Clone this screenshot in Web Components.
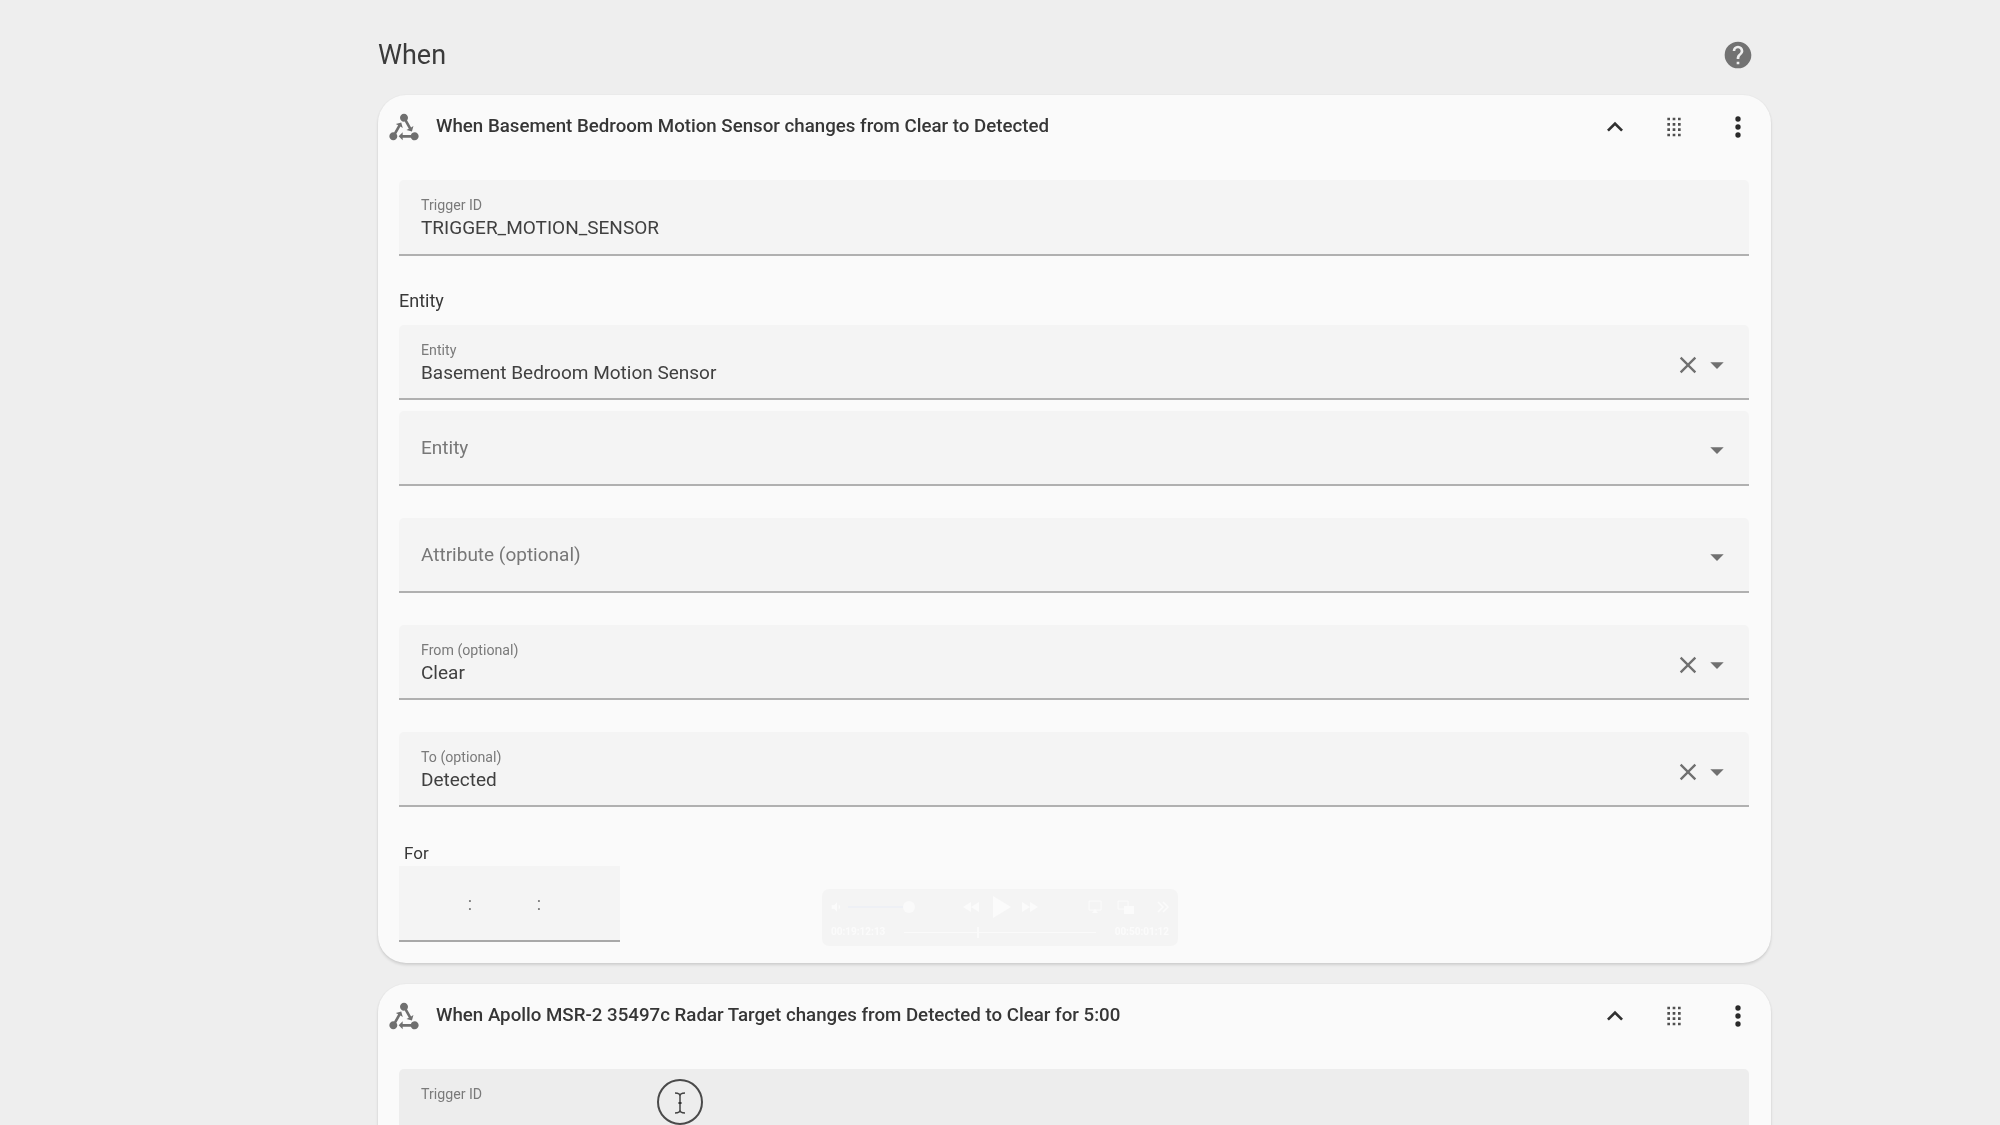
<!DOCTYPE html>
<html lang="en"><head><meta charset="utf-8"><title>When</title>
<style>
html,body{margin:0;height:1125px;overflow:hidden;background:#eeeeee;font-family:Roboto,"Liberation Sans",sans-serif;color:#212121}
body{filter:blur(.5px)}
</style></head><body>
<ha-page>
  <trigger-card title-text="When Basement Bedroom Motion Sensor changes from Clear to Detected">
    <text-field style="height:76px" label="Trigger ID" value="TRIGGER_MOTION_SENSOR"></text-field>
    <section-label style="margin:31px 0 0">Entity</section-label>
    <text-field style="margin-top:10px" label="Entity" value="Basement Bedroom Motion Sensor" clear arrow></text-field>
    <text-field style="margin-top:11px;height:75px" label="Entity" arrow></text-field>
    <text-field style="margin-top:32px" label="Attribute (optional)" arrow></text-field>
    <text-field style="margin-top:32px" label="From (optional)" value="Clear" clear arrow></text-field>
    <text-field style="margin-top:32px" label="To (optional)" value="Detected" clear arrow></text-field>
    <section-label style="margin:33px 0 0 5px;font-size:17px;line-height:26px">For</section-label>
    <duration-field></duration-field>
  </trigger-card>
  <trigger-card title-text="When Apollo MSR-2 35497c Radar Target changes from Detected to Clear for 5:00">
    <text-field label="Trigger ID" hover></text-field>
  </trigger-card>
</ha-page>
<media-hud></media-hud>
<cursor-ring></cursor-ring>
<script>
const P={
 state:"M6.27 17.05C6.72 17.58 7 18.25 7 19C7 20.66 5.66 22 4 22S1 20.66 1 19 2.34 16 4 16C4.18 16 4.36 16 4.53 16.05L7.6 10.69L5.86 9.7L9.95 8.58L11.07 12.67L9.33 11.68L6.27 17.05M20 16C18.7 16 17.6 16.84 17.18 18H11V16L8 19L11 22V20H17.18C17.6 21.16 18.7 22 20 22C21.66 22 23 20.66 23 19S21.66 16 20 16M12 8C12.18 8 12.36 8 12.53 7.95L15.6 13.31L13.86 14.3L17.95 15.42L19.07 11.33L17.33 12.32L14.27 6.95C14.72 6.42 15 5.75 15 5C15 3.34 13.66 2 12 2S9 3.34 9 5 10.34 8 12 8Z",
 help:"M15.07,11.25L14.17,12.17C13.45,12.89 13,13.5 13,15H11V14.5C11,13.39 11.45,12.39 12.17,11.67L13.41,10.41C13.78,10.05 14,9.55 14,9C14,7.89 13.1,7 12,7A2,2 0 0,0 10,9H8A4,4 0 0,1 12,5A4,4 0 0,1 16,9C16,9.88 15.64,10.67 15.07,11.25M13,19H11V17H13M12,2A10,10 0 0,0 2,12A10,10 0 0,0 12,22A10,10 0 0,0 22,12C22,6.47 17.5,2 12,2Z",
 up:"M7.41,15.41L12,10.83L16.59,15.41L18,14L12,8L6,14L7.41,15.41Z",
 drag:"M7,19V17H9V19H7M11,19V17H13V19H11M15,19V17H17V19H15M7,15V13H9V15H7M11,15V13H13V15H11M15,15V13H17V15H15M7,11V9H9V11H7M11,11V9H13V11H11M15,11V9H17V11H15M7,7V5H9V7H7M11,7V5H13V7H11M15,7V5H17V7H15Z",
 dots:"M12,16A2,2 0 0,1 14,18A2,2 0 0,1 12,20A2,2 0 0,1 10,18A2,2 0 0,1 12,16M12,10A2,2 0 0,1 14,12A2,2 0 0,1 12,14A2,2 0 0,1 10,12A2,2 0 0,1 12,10M12,4A2,2 0 0,1 14,6A2,2 0 0,1 12,8A2,2 0 0,1 10,6A2,2 0 0,1 12,4Z",
 close:"M19,6.41L17.59,5L12,10.59L6.41,5L5,6.41L10.59,12L5,17.59L6.41,19L12,13.41L17.59,19L19,17.59L13.41,12L19,6.41Z",
 down:"M7,10L12,15L17,10H7Z"
};
const svg=(n,s,c)=>`<svg width="${s}" height="${s}" viewBox="0 0 24 24" style="display:block;flex:none" aria-hidden="true"><path fill="${c}" d="${P[n]}"/></svg>`;
class Base extends HTMLElement{
 render(h){(this.shadowRoot||this.attachShadow({mode:"open"})).innerHTML=h}
}
customElements.define("ha-page",class extends Base{connectedCallback(){this.render(`<style>
:host{display:block;width:1393px;margin-left:378px}
header{display:flex;align-items:center;justify-content:space-between;height:95px;padding:14px 17px 0 0;box-sizing:border-box}
h1{margin:0;font:400 27px/32px Roboto,sans-serif;color:#3b3b3b}
.cards{display:flex;flex-direction:column;gap:21px}
</style><header><h1>When</h1>${svg("help",32,"#727272")}</header><div class="cards"><slot></slot></div>`)}});
customElements.define("trigger-card",class extends Base{connectedCallback(){this.render(`<style>
:host{display:block;background:#fafafa;border-radius:28px;box-shadow:0 2px 3px rgba(0,0,0,.13),0 0 2px rgba(0,0,0,.05)}
.head{display:flex;align-items:center;height:85px;padding:0 0 21px 0;box-sizing:border-box}
.st{margin-left:10px}
.t{flex:1;margin-left:16px;font:500 18.7px/24px Roboto,sans-serif;color:#363636;position:relative;top:-1px}
.i{width:32px;display:flex;justify-content:center}
.a{margin-right:27px}.b{margin-right:32px}.c{margin-right:17px}
.body{display:flex;flex-direction:column;padding:0 22px 21px 21px}
</style><div class="head"><span class="st">${svg("state",32,"#6f6f6f")}</span><span class="t">${this.getAttribute("title-text")}</span>
<span class="i a">${svg("up",32,"#303030")}</span><span class="i b">${svg("drag",32,"#505050")}</span><span class="i c">${svg("dots",32,"#2a2a2a")}</span></div>
<div class="body"><slot></slot></div>`)}});
customElements.define("section-label",class extends Base{connectedCallback(){this.render(`<style>:host{display:block;font:400 18px/28px Roboto,sans-serif;color:#383838}</style><slot></slot>`)}});
customElements.define("text-field",class extends Base{connectedCallback(){
 const v=this.getAttribute("value"),l=this.getAttribute("label"),hov=this.hasAttribute("hover");
 const clear=this.hasAttribute("clear");
 const tail=(clear?`<span class="x">${svg("close",28,"#707070")}</span>`:"")+(this.hasAttribute("arrow")?`<span class="ar">${svg("down",32,"#707070")}</span>`:"");
 const txt=(v||hov)?`<div class="lb">${l}</div><div class="v">${v||""}</div>`:`<div class="ph">${l}</div>`;
 this.render(`<style>
:host{display:flex;align-items:stretch;height:75px;box-sizing:border-box;background:${hov?"#ededed":"#f4f4f4"};border-bottom:2px solid #b0b0b0;border-radius:5px 5px 0 0;padding:0 16px 0 22px}
.txt{flex:1;display:flex;flex-direction:column;justify-content:center;min-width:0;padding-top:${(v||hov)?2:0}px}
.lb{font:400 14.2px/20px Roboto,sans-serif;color:#7a7a7a;margin-top:-1px}
.v{font:400 19px/24px Roboto,sans-serif;color:#404040;min-height:24px;margin-top:1px}
.ph{font:400 19px/24px Roboto,sans-serif;color:#777}
.tail{display:flex;align-items:center;padding-top:${clear?4:2}px}
.x{margin-right:-1px;margin-top:2px}.ar{margin-top:2px}
</style><div class="txt">${txt}</div><div class="tail">${tail}</div>`)}});
customElements.define("duration-field",class extends Base{connectedCallback(){this.render(`<style>
:host{display:block;width:221px;height:76px;box-sizing:border-box;background:#f4f4f4;border-bottom:2px solid #a8a8a8}
.r{display:grid;grid-template-columns:73px 69px;height:100%;align-items:center;justify-items:end;font:400 18px/20px Roboto,sans-serif;color:#777;padding-top:1px;box-sizing:border-box}
</style><div class="r"><span>:</span><span>:</span></div>`)}});
customElements.define("media-hud",class extends Base{connectedCallback(){this.render(`<style>
:host{position:absolute;left:822px;top:889px;width:356px;height:57px;background:#f4f4f4;border-radius:7px;display:block;color:#fbfbfb;font:700 10px/12px Roboto,sans-serif}
.top{display:flex;align-items:center;height:36px;padding:0 8px}
.vol{width:56px;height:2px;background:#eef0f5;margin-left:4px;position:relative;flex:none}
.vol::after{content:"";position:absolute;right:-11px;top:-5px;width:12px;height:12px;border-radius:50%;background:#fafafa}
.bot{display:flex;align-items:center;gap:19px;padding:1px 9px 0}
.track{flex:1;height:1px;background:#fafafa;position:relative}
.track::after{content:"";position:absolute;left:73px;top:-5px;width:2px;height:11px;background:#fafafa}
svg{display:block;flex:none}
</style><div class="top">
<svg width="14" height="14" viewBox="0 0 24 24"><path fill="#fbfbfb" d="M3 9v6h4l5 5V4L7 9H3zM15 8v8c3-1 3-7 0-8z"/></svg><div class="vol"></div>
<svg style="margin-left:58px" width="18" height="14" viewBox="0 0 18 14"><path fill="#fbfbfb" d="M9 2v10L1 7zM17 2v10L9 7z"/></svg>
<svg style="margin-left:12px" width="20" height="24" viewBox="0 0 20 24"><path fill="#fbfbfb" d="M1 1l18 11L1 23z"/></svg>
<svg style="margin-left:9px" width="18" height="14" viewBox="0 0 18 14"><path fill="#fbfbfb" d="M1 2v10l8-5zM9 2v10l8-5z"/></svg>
<svg style="margin-left:49px" width="14" height="14" viewBox="0 0 14 14"><path fill="none" stroke="#fbfbfb" d="M1 1h12v9H1z"/><path fill="#fbfbfb" d="M4 13l3-4 3 4z"/></svg>
<svg style="margin-left:15px" width="18" height="15" viewBox="0 0 18 15"><path fill="none" stroke="#fbfbfb" d="M1 1h10v8H1z"/><path fill="#fbfbfb" d="M7 6h10v8H7z"/></svg>
<svg style="margin-left:22px" width="12" height="12" viewBox="0 0 12 12"><path fill="none" stroke="#fbfbfb" stroke-width="1.5" d="M1 1l5 5-5 5M6 1l5 5-5 5"/></svg>
</div><div class="bot"><span>00:19:12:13</span><div class="track"></div><span>00:50:01:12</span></div>`)}});
customElements.define("cursor-ring",class extends Base{connectedCallback(){this.render(`<style>
:host{position:absolute;left:657px;top:1079px;width:46px;height:46px;display:block;box-sizing:border-box;border:2px solid #4a4a4a;border-radius:50%}
svg{position:absolute;left:14px;top:11px}
</style><svg width="14" height="22" viewBox="0 0 14 22"><path fill="none" stroke="#444" stroke-width="1.5" d="M2 1c3 0 5 1 5 3v14c0 2-2 3-5 3M12 1c-3 0-5 1-5 3v14c0 2 2 3 5 3"/><rect x="5.5" y="10" width="3" height="2" fill="#333"/></svg>`)}});
</script>
</body></html>
